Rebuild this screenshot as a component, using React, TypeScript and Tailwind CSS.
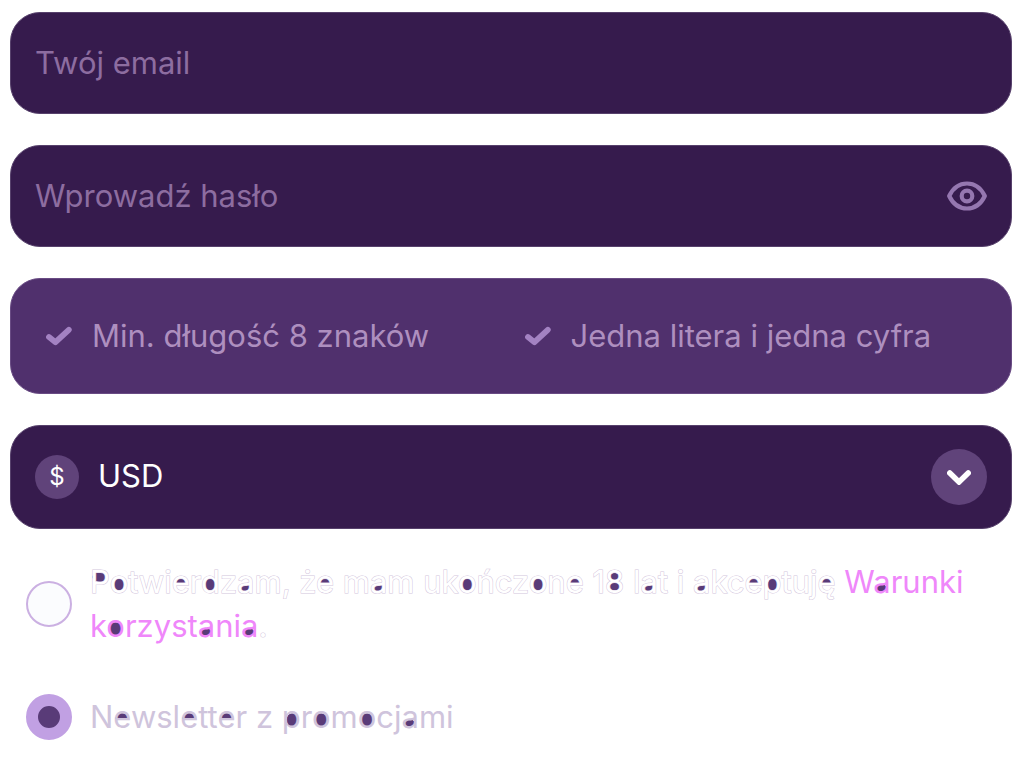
import { useState, type ReactNode } from 'react';

const field =
  'block w-full rounded-[30px] border border-[#57416c] bg-[#361b4d] pb-0.5 text-[31px] outline-none placeholder:text-[#8d6da0] placeholder:opacity-100';

function CheckMark() {
  return (
    <svg viewBox="0 0 26 20" className="h-5 w-[26px] shrink-0" aria-hidden="true">
      <path d="M3 11 L9.5 16.2 L22.800 3.800" fill="none" stroke="#a382c2" strokeWidth="5.800" strokeLinecap="round" strokeLinejoin="round" />
    </svg>
  );
}

function Hint({ children }: { children: ReactNode }) {
  return (
    <li className="flex items-center gap-5 whitespace-nowrap">
      <CheckMark />
      <span>{children}</span>
    </li>
  );
}

const round =
  'bg-[radial-gradient(ellipse_7px_7px_at_50%_22px,#593b78_90%,transparent)]';
const roundLeft =
  'bg-[radial-gradient(ellipse_6px_7px_at_46%_22px,#593b78_90%,transparent)]';
const roundRight =
  'bg-[radial-gradient(ellipse_6px_7px_at_54%_22px,#593b78_90%,transparent)]';
const upper =
  'bg-[radial-gradient(ellipse_7px_6px_at_50%_21px,#593b78_90%,transparent)] bg-[length:100%_21px] bg-no-repeat';
const lower =
  'bg-[radial-gradient(ellipse_6px_4px_at_45%_25px,#593b78_85%,transparent)]';
const bowl =
  'bg-[radial-gradient(ellipse_8px_5px_at_50%_14px,#593b78_90%,transparent)]';
const double =
  'bg-[radial-gradient(ellipse_6px_4px_at_50%_14px,#593b78_90%,transparent),radial-gradient(ellipse_7px_5px_at_50%_24px,#593b78_90%,transparent)]';

const counters: Record<string, string> = {
  o: round,
  p: roundRight,
  d: roundLeft,
  e: upper,
  ę: upper,
  a: lower,
  P: bowl,
  '8': double,
};

function Filled({ text }: { text: string }) {
  return (
    <>
      {text
        .split(/([opdeęaP8 ])/)
        .filter(Boolean)
        .map((part, i) => (
          <span key={i} className={counters[part]}>
            {part}
          </span>
        ))}
    </>
  );
}

const toggle =
  'size-[46px] shrink-0 appearance-none rounded-full border-2 border-[#cbb0e2] bg-[#fbfcfe] checked:border-[12px] checked:border-[#c1a0e3] checked:bg-[#593b78]';

export default function App() {
  const [currency, setCurrency] = useState('USD');

  return (
    <form className="flex flex-col gap-[31px] bg-white pt-3 pr-3 pb-[18px] pl-[10px] font-['Inter',sans-serif] text-[31px]">
      <input type="email" aria-label="Twój email" placeholder="Twój email" className={`${field} h-[102px] px-6 text-white`} />

      <div className="relative">
        <input type="password" aria-label="Wprowadź hasło" placeholder="Wprowadź hasło" className={`${field} h-[102px] pr-24 pl-6 text-white`} />
        <button type="button" aria-label="Pokaż hasło" className="absolute inset-y-0 right-[25px] flex items-center">
          <svg viewBox="0 0 40 30" className="h-[30px] w-10" fill="none" stroke="#9577b0" strokeWidth="4.200" aria-hidden="true">
            <path d="M2.200 15 C6 7 12.500 2.500 20 2.500 S34 7 37.800 15 C34 23 27.500 27.500 20 27.500 S6 23 2.200 15 Z" strokeLinejoin="round" />
            <circle cx="20" cy="15" r="5.300" />
          </svg>
        </button>
      </div>

      <ul className="grid h-[116px] grid-cols-2 items-center rounded-[30px] border border-[#694b84] bg-[#50306d] pr-2 pl-[35px] text-[#ae8fbf]">
        <Hint>Min. długość 8 znaków</Hint>
        <Hint>Jedna litera i jedna cyfra</Hint>
      </ul>

      <div className="relative">
        <select
          aria-label="Waluta"
          value={currency}
          onChange={(e) => setCurrency(e.target.value)}
          className={`${field} h-[104px] appearance-none pr-24 pl-[87px] text-white`}
        >
          <option>USD</option>
        </select>
        <span className="pointer-events-none absolute inset-y-0 left-[25px] flex items-center">
          <span className="flex size-11 items-center justify-center rounded-full bg-[#60437a] text-2xl text-white">$</span>
        </span>
        <span className="pointer-events-none absolute inset-y-0 right-[25px] flex items-center">
          <span className="flex size-14 items-center justify-center rounded-full bg-[#60437a]">
            <svg viewBox="0 0 24 16" className="h-4 w-6" aria-hidden="true">
              <path d="M2.800 4 L12 13 L21.200 4" fill="none" stroke="white" strokeWidth="5.500" strokeLinecap="round" />
            </svg>
          </span>
        </span>
      </div>

      <div className="flex flex-col gap-[46px] pl-4 leading-[44px]">
        <div className="flex items-center gap-[18px]">
          <input id="terms" type="checkbox" className={toggle} />
          <label htmlFor="terms" className="text-white [-webkit-text-stroke:1px_#d3c6dd] [paint-order:stroke]">
            <Filled text="Potwierdzam, że mam ukończone 18 lat i akceptuję " />
            <a href="#terms" className="text-[#ef87fa] [-webkit-text-stroke:0px]">
              <Filled text="Warunki korzystania" />
            </a>
            <span>.</span>
          </label>
        </div>
        <div className="flex items-center gap-[18px]">
          <input id="newsletter" type="checkbox" defaultChecked className={toggle} />
          <label htmlFor="newsletter" className="text-[#cfc4dc]">
            <Filled text="Newsletter z promocjami" />
          </label>
        </div>
      </div>
    </form>
  );
}
